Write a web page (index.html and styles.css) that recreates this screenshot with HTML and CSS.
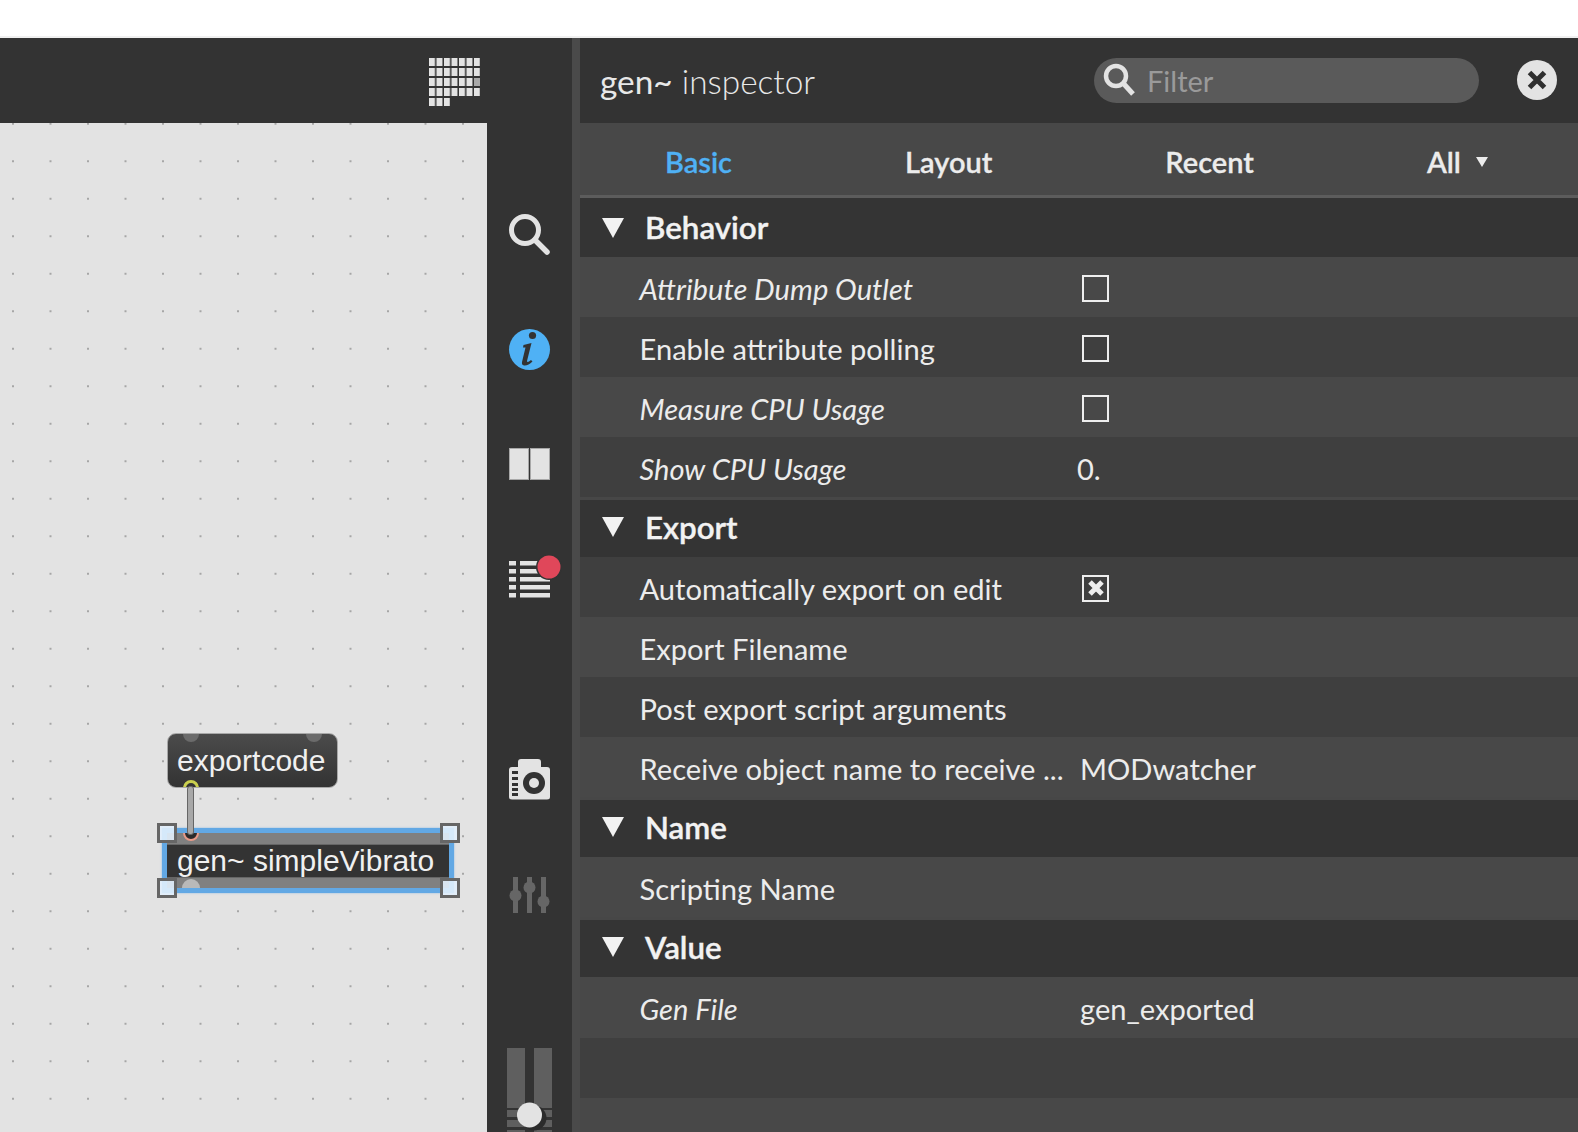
FILE: index.html
```html
<!DOCTYPE html>
<html lang="en">
<head>
  <meta charset="UTF-8">
  <title>gen~ inspector</title>
  <meta name="viewport" content="width=device-width, initial-scale=1.0">
  <link rel="stylesheet" href="styles.css">
</head>
<body>

  <div class="titlebar"></div>

  <div class="app">
    <div class="patcher">
      <div class="toolbar">
        <svg class="grid-icon" width="51" height="48" viewBox="0 0 51 48">
          <defs>
            <pattern id="cells" width="7.5" height="10" patternUnits="userSpaceOnUse">
              <rect width="6" height="8" fill="#e3e3e3"/>
            </pattern>
          </defs>
          <rect width="51" height="40" fill="url(#cells)"/>
          <rect y="40" width="21" height="8" fill="url(#cells)"/>
          <rect x="45" y="20" width="6" height="8" fill="#a9a9a9"/>
        </svg>
      </div>

      <div class="patcher-body">
        <div class="canvas">
          <div class="obj msg">
            <span class="port port-in1"></span>
            <span class="port port-in2"></span>
            <span class="port port-out"></span>
            exportcode
          </div>

          <div class="cord"></div>

          <div class="obj-selected">
            <div class="gen-band">
              <span class="gen-inlet"></span>
            </div>
            <div class="gen-label">gen~ simpleVibrato</div>
            <div class="gen-band">
              <span class="gen-outlet"></span>
            </div>
          </div>

          <span class="handle handle-tl"></span>
          <span class="handle handle-tr"></span>
          <span class="handle handle-bl"></span>
          <span class="handle handle-br"></span>
        </div>

        <div class="sidebar">
          <svg class="icon-search" width="44" height="42" viewBox="0 0 44 42">
            <circle cx="16" cy="16" r="13.5" fill="none" stroke="#e3e3e3" stroke-width="5"/>
            <path d="M26 26 L38 38" stroke="#e3e3e3" stroke-width="5.5" stroke-linecap="round"/>
          </svg>

          <svg class="icon-info" width="41" height="41" viewBox="0 0 41 41">
            <circle cx="20.5" cy="20.5" r="20.5" fill="#4fb1f5"/>
            <circle cx="23.5" cy="6.5" r="3.6" fill="#333"/>
            <path d="M14.5 16 L22.5 14 L18 32 Q18 34.5 22 31 L23.5 32.5 Q19 37 15 36.5 Q12.5 36 13 33 L16.5 18.5 L14 18.5 Z" fill="#333"/>
          </svg>

          <svg class="icon-book" width="41" height="32" viewBox="0 0 41 32">
            <rect x="0.5" y="0.5" width="19" height="31" fill="#e3e3e3" stroke="#a8a8a8"/>
            <rect x="21.5" y="0.5" width="19" height="31" fill="#e3e3e3" stroke="#a8a8a8"/>
          </svg>

          <svg class="icon-list" width="41" height="44" viewBox="0 0 41 44">
            <g fill="#e3e3e3">
              <rect y="7" width="7" height="4.5"/>
              <rect x="11" y="7" width="30" height="4.5"/>
              <rect y="15" width="7" height="4.5"/>
              <rect x="11" y="15" width="30" height="4.5"/>
              <rect y="23" width="7" height="4.5"/>
              <rect x="11" y="23" width="30" height="4.5"/>
              <rect y="31" width="7" height="4.5"/>
              <rect x="11" y="31" width="30" height="4.5"/>
              <rect y="39" width="7" height="4.5"/>
              <rect x="11" y="39" width="30" height="4.5"/>
            </g>
            <circle cx="40" cy="13" r="13" fill="#333"/>
            <circle cx="40" cy="13" r="11.5" fill="#e0475a"/>
          </svg>

          <svg class="icon-camera" width="41" height="41" viewBox="0 0 41 41">
            <path d="M9 8 V3 Q9 0 12 0 H29 Q32 0 32 3 V8 H38 Q41 8 41 11 V38 Q41 40.5 38 40.5 H3 Q0 40.5 0 38 V11 Q0 8 3 8 Z" fill="#e3e3e3"/>
            <circle cx="25" cy="24" r="11" fill="#333"/>
            <circle cx="25" cy="24" r="5" fill="#e3e3e3"/>
            <g fill="#333">
              <rect x="3" y="12" width="6" height="3"/>
              <rect x="3" y="18" width="6" height="3"/>
              <rect x="3" y="24" width="6" height="3"/>
              <rect x="3" y="29" width="6" height="3"/>
              <rect x="3" y="34" width="6" height="3"/>
            </g>
          </svg>

          <svg class="icon-mixer" width="41" height="36" viewBox="0 0 41 36" fill="#666">
            <rect x="4" width="5" height="36"/>
            <rect x="18" width="5" height="36"/>
            <rect x="32" width="5" height="36"/>
            <circle cx="6.5" cy="18.5" r="6"/>
            <circle cx="20.5" cy="10.5" r="6"/>
            <circle cx="34.5" cy="24.5" r="6"/>
          </svg>

          <svg class="icon-slider" width="46" height="84" viewBox="0 0 46 84">
            <g fill="#5f5f5f">
              <rect width="18" height="60"/>
              <rect x="27" width="18" height="60"/>
              <rect y="62" width="45" height="7"/>
              <rect y="72" width="45" height="7"/>
              <rect y="82" width="45" height="2"/>
            </g>
            <rect x="18" y="60" width="9" height="24" fill="#333"/>
            <circle cx="27" cy="70" r="12.5" fill="#2b2b2b"/>
            <circle cx="22.5" cy="67" r="12.5" fill="#e3e3e3"/>
          </svg>
        </div>
      </div>
    </div>

    <div class="divider"></div>

    <div class="inspector">
      <div class="inspector-top">
        <div class="inspector-title"><span class="title-object">gen~</span> inspector</div>
        <div class="filter">
          <svg width="34" height="34" viewBox="0 0 34 34">
            <circle cx="13" cy="13" r="10" fill="none" stroke="#e3e3e3" stroke-width="4.5"/>
            <path d="M20 20 L30 31" stroke="#e3e3e3" stroke-width="5"/>
          </svg>
          <span>Filter</span>
        </div>
        <svg class="close-btn" width="40" height="40" viewBox="0 0 40 40">
          <circle cx="20" cy="20" r="20" fill="#e3e3e3"/>
          <path d="M12.5 12.5 L27.5 27.5 M27.5 12.5 L12.5 27.5" stroke="#2f2f2f" stroke-width="5"/>
        </svg>
      </div>

      <div class="tabs">
        <span class="tab tab-active">Basic</span>
        <span class="tab">Layout</span>
        <span class="tab">Recent</span>
        <span class="tab">All<i class="tab-arrow"></i></span>
      </div>

      <div class="group-head"><i class="triangle"></i>Behavior</div>
      <div class="row"><span class="label italic">Attribute Dump Outlet</span><span class="check"></span></div>
      <div class="row row-dark"><span class="label">Enable attribute polling</span><span class="check"></span></div>
      <div class="row"><span class="label italic">Measure CPU Usage</span><span class="check"></span></div>
      <div class="row row-dark row-last"><span class="label italic">Show CPU Usage</span><span class="value value-num">0.</span></div>

      <div class="group-head"><i class="triangle"></i>Export</div>
      <div class="row row-dark"><span class="label">Automatically export on edit</span>
        <span class="check">
          <svg width="22" height="22" viewBox="0 0 22 22"><path d="M5 5 L17 17 M17 5 L5 17" stroke="#eee" stroke-width="5"/></svg>
        </span>
      </div>
      <div class="row"><span class="label">Export Filename</span></div>
      <div class="row row-dark"><span class="label">Post export script arguments</span></div>
      <div class="row row-last"><span class="label">Receive object name to receive ...</span><span class="value">MODwatcher</span></div>

      <div class="group-head"><i class="triangle"></i>Name</div>
      <div class="row row-last"><span class="label">Scripting Name</span></div>

      <div class="group-head"><i class="triangle"></i>Value</div>
      <div class="row row-gen"><span class="label italic">Gen File</span><span class="value">gen_exported</span></div>
      <div class="row row-dark"></div>
      <div class="row"></div>
    </div>
  </div>

</body>
</html>
```

FILE: styles.css
```css
body {
  margin: 0;
  height: 1132px;
  overflow: hidden;
  background-color: #ffffff;
  font-family: "Lato", sans-serif;
  color: #ececec;
}

.titlebar {
  height: 36px;
  background-color: #ffffff;
  border-bottom: 2px solid #f0f0f0;
}

.app {
  display: flex;
  height: 1094px;
  background-color: #333333;
}

/* patcher side */
.patcher {
  width: 572px;
  flex-shrink: 0;
  display: flex;
  flex-direction: column;
}

.toolbar {
  height: 85px;
  display: flex;
  justify-content: flex-end;
  align-items: flex-start;
  padding-right: 92px;
}

.grid-icon {
  display: block;
  margin-top: 20px;
}

.patcher-body {
  flex: 1;
  display: flex;
}

.canvas {
  position: relative;
  width: 487px;
  background-color: #e3e3e3;
  background-image: radial-gradient(circle, #a6a6a6 1px, transparent 1.4px);
  background-size: 37.5px 37.5px;
  background-position: -5.75px -18px;
  font-family: "Liberation Sans", Arial, sans-serif;
}

/* patcher objects sit on a free canvas */
.obj {
  position: absolute;
  box-sizing: border-box;
  color: #f0f0f0;
  font-size: 30px;
}

.msg {
  left: 167px;
  top: 610px;
  width: 171px;
  height: 55px;
  padding: 10px 0 0 9px;
  line-height: 34px;
  border: 1px solid #a8a8a8;
  border-radius: 9px;
  background: linear-gradient(#4b4b4b, #333333);
  overflow: hidden;
}

.port {
  position: absolute;
  width: 16px;
  height: 16px;
  border-radius: 50%;
}

.port-in1 {
  left: 15px;
  top: -8px;
  background-color: #6b6b6b;
}

.port-in2 {
  right: 15px;
  top: -8px;
  background-color: #6b6b6b;
}

.port-out {
  left: 15px;
  bottom: -9px;
  border: 3px solid #c9cf4e;
  box-sizing: border-box;
}

.cord {
  position: absolute;
  left: 187px;
  top: 663px;
  width: 5px;
  height: 47px;
  background-color: #a8a8a8;
  border: 1px solid #666666;
  border-radius: 3px;
  z-index: 2;
}

.obj-selected {
  position: absolute;
  left: 162px;
  top: 705px;
  width: 292px;
  height: 65px;
  box-sizing: border-box;
  border: 5px solid #62a8e4;
  display: flex;
  flex-direction: column;
  overflow: hidden;
  box-shadow: 0 0 2px rgba(91, 164, 226, 0.6);
}

.gen-band {
  flex: 1;
  position: relative;
  background-color: #808080;
  overflow: hidden;
}

.gen-inlet {
  position: absolute;
  left: 16px;
  top: -8px;
  width: 16px;
  height: 16px;
  box-sizing: border-box;
  border-radius: 50%;
  background-color: #2b2b2b;
  border: 2px solid #e89a88;
}

.gen-outlet {
  position: absolute;
  left: 15px;
  bottom: -9px;
  width: 18px;
  height: 18px;
  border-radius: 50%;
  background-color: #b9b9b9;
}

.gen-label {
  height: 34px;
  line-height: 31px;
  padding-left: 10px;
  background-color: #333333;
  color: #f0f0f0;
  font-size: 30px;
  white-space: nowrap;
  border-top: 1px solid #666666;
  border-bottom: 1px solid #666666;
  box-sizing: border-box;
}

.handle {
  position: absolute;
  width: 20px;
  height: 20px;
  box-sizing: border-box;
  border: 3px solid #666666;
  background-color: rgba(226, 240, 252, 0.9);
  z-index: 3;
}

.handle-tl { left: 157px; top: 700px; }
.handle-tr { left: 440px; top: 700px; }
.handle-bl { left: 157px; top: 755px; }
.handle-br { left: 440px; top: 755px; }

.sidebar {
  width: 85px;
  display: flex;
  flex-direction: column;
  align-items: center;
  overflow: hidden;
}

.sidebar svg {
  display: block;
  flex-shrink: 0;
  overflow: visible;
}

.icon-search { margin-top: 91px; margin-left: 3px; }
.icon-info { margin-top: 73px; }
.icon-book { margin-top: 78px; }
.icon-list { margin-top: 74px; }
.icon-camera { margin-top: 161px; }
.icon-mixer { margin-top: 77px; }
.icon-slider { margin-top: 135px; }

.divider {
  width: 8px;
  flex-shrink: 0;
  background-color: #4a4a4a;
}

/* inspector side */
.inspector {
  flex: 1;
  min-width: 0;
}

.inspector-top {
  height: 85px;
  display: flex;
  align-items: center;
  background-color: #333333;
  padding-left: 20px;
}

.inspector-title {
  width: 494px;
  font-size: 33.4px;
  font-weight: 300;
  color: #e8e8e8;
}

.title-object {
  font-weight: 400;
}

.filter {
  width: 385px;
  height: 45px;
  margin-top: -1px;
  border-radius: 23px;
  background-color: #5a5a5a;
  display: flex;
  align-items: center;
  padding-left: 9px;
  box-sizing: border-box;
  color: #9a9a9a;
  font-size: 29px;
  gap: 10px;
}

.close-btn {
  margin-left: 38px;
  margin-top: -2px;
}

.tabs {
  height: 72px;
  box-sizing: border-box;
  padding: 4px 0 0 85px;
  display: flex;
  align-items: center;
  gap: 173px;
  background-color: #484848;
  font-size: 29px;
  font-weight: 600;
  -webkit-text-stroke: 0.3px currentColor;
  color: #ececec;
  white-space: nowrap;
}

.tab-active {
  color: #4fb1f5;
}

.tab-arrow {
  display: inline-block;
  margin-left: 15px;
  vertical-align: 6px;
  border-left: 6px solid transparent;
  border-right: 6px solid transparent;
  border-top: 10px solid #ececec;
}

.group-head {
  height: 57px;
  box-sizing: border-box;
  display: flex;
  align-items: center;
  background-color: #343434;
  color: #f2f2f2;
  font-size: 31.3px;
  font-weight: 600;
  -webkit-text-stroke: 0.4px currentColor;
  padding: 0 0 4px 22px;
}

.tabs + .group-head {
  height: 62px;
  padding-top: 3px;
  border-top: 3px solid #5c5c5c;
  background-clip: padding-box;
}

.triangle {
  width: 0;
  height: 0;
  margin-right: 21px;
  margin-top: 1px;
  border-left: 11px solid transparent;
  border-right: 11px solid transparent;
  border-top: 20px solid #f2f2f2;
}

.row {
  height: 60px;
  box-sizing: border-box;
  display: flex;
  align-items: center;
  padding: 2px 0 0 59.5px;
  background-color: #484848;
  font-size: 29.1px;
  color: #ececec;
}

.row-dark {
  background-color: #3f3f3f;
}

.row-last {
  height: 63px;
  padding-bottom: 3px;
  box-shadow: inset 0 -3px 0 #474747;
}

.row-gen {
  height: 61px;
}

.label {
  width: 440.5px;
  flex-shrink: 0;
  white-space: nowrap;
}

.italic {
  font-style: italic;
}

.check {
  width: 27px;
  height: 27px;
  box-sizing: border-box;
  margin: 0 0 0 2px;
  border: 2.5px solid #eeeeee;
  display: flex;
  align-items: center;
  justify-content: center;
}

.check svg {
  display: block;
  flex-shrink: 0;
}

.value-num {
  margin-left: -3px;
}
```
